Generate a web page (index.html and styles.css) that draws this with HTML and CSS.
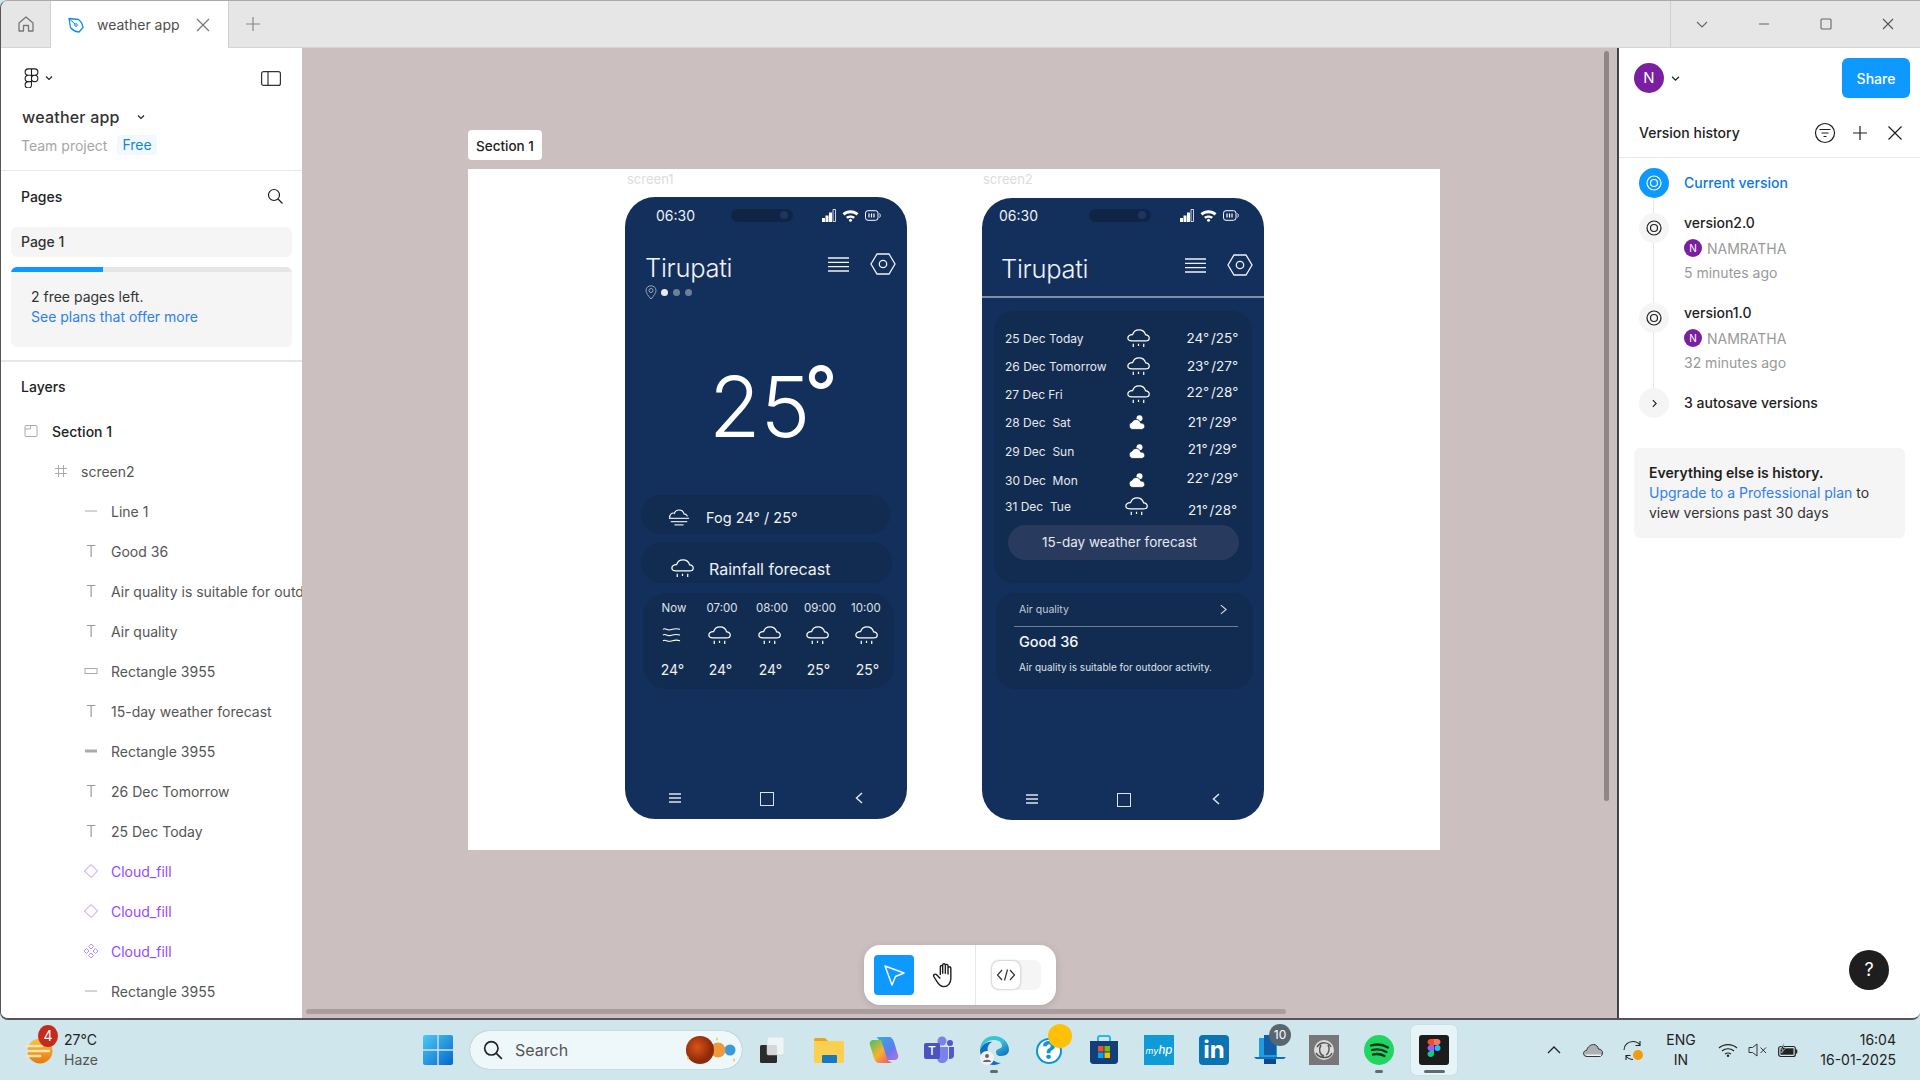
FILE: index.html
```html
<!DOCTYPE html>
<html lang="en">
<head>
<meta charset="utf-8">
<title>weather app – Figma</title>
<link rel="stylesheet" href="styles.css">
</head>
<body>
<svg class="sprite" xmlns="http://www.w3.org/2000/svg">
  <symbol id="rain" viewBox="0 0 24 20">
    <path d="M5 12.5H19.5C22 12.5 23.3 11 23.3 9.4C23.3 7.5 21.5 6 19.5 6.2C18.6 3.2 15.8 1 12.6 1C9.2 1 6.6 3.1 5.8 6C3 5.8.8 7.4.8 9.5C.8 11.3 2.6 12.5 5 12.5Z" fill="none" stroke="currentColor" stroke-width="1.3"/>
    <path d="M6.5 15.5V19M12 15.5V18M17.5 15.5V19" stroke="currentColor" stroke-width="1.3" fill="none"/>
  </symbol>
  <symbol id="moon" viewBox="0 0 16 14.500">
    <circle cx="10.500" cy="3" r="3" fill="currentColor"/>
    <path d="M4 14.200C1.800 14.200 .2 12.500 .2 10.500C.2 8.500 1.600 7.200 3 7C3.800 5.200 5.400 4.200 7.200 4.200C9.600 4.200 11.200 5.800 11.700 7.800C14 7.600 15.800 9 15.800 11.100C15.800 12.900 14.400 14.200 12.400 14.200Z" fill="currentColor" stroke="#122b50" stroke-width=".8"/>
  </symbol>
  <symbol id="burger" viewBox="0 0 21 15">
    <path d="M0 1H21M0 5.300H21M0 9.600H21M0 14H21" stroke="currentColor" stroke-width="1.300" fill="none"/>
  </symbol>
  <symbol id="hex" viewBox="0 0 26 22">
    <path d="M7 1H19L25 11L19 21H7L1 11Z" fill="none" stroke="currentColor" stroke-width="1.300"/>
    <circle cx="13" cy="11" r="3.700" fill="none" stroke="currentColor" stroke-width="1.300"/>
  </symbol>
  <symbol id="signal" viewBox="0 0 14 13">
    <path d="M0 9h3v4H0zM3.500 6.500h3V13h-3zM7 3.500h3V13H7z" fill="currentColor"/>
    <path d="M11 .5h2.500V12.500H11z" fill="none" stroke="currentColor" stroke-width=".8"/>
  </symbol>
  <symbol id="wifi" viewBox="0 0 17 13">
    <path d="M.5 4.300C5 .3 12 .3 16.500 4.300L14.500 6.500C11 3.500 6 3.500 2.500 6.500Z" fill="currentColor"/>
    <path d="M4 8C6.500 6 10.500 6 13 8L11.300 9.700C9.700 8.500 7.300 8.500 5.700 9.700Z" fill="currentColor"/>
    <circle cx="8.500" cy="11.300" r="1.500" fill="currentColor"/>
  </symbol>
  <symbol id="batt" viewBox="0 0 16 11">
    <rect x=".5" y=".7" width="12.500" height="9.600" rx="2.500" fill="none" stroke="currentColor" stroke-width="1"/>
    <path d="M4 3.500V7.500M6.500 3.500V7.500M9 3.500V7.500" stroke="currentColor" stroke-width="1.200"/>
    <path d="M14.500 3.500C15.500 4.500 15.500 6.500 14.500 7.500" stroke="currentColor" fill="none"/>
  </symbol>
  <symbol id="navburger" viewBox="0 0 14 14">
    <path d="M1 3H13M1 7H13M1 11H13" stroke="currentColor" stroke-width="1.500"/>
  </symbol>
  <symbol id="navsquare" viewBox="0 0 14 14">
    <rect x=".5" y=".5" width="13" height="13" fill="none" stroke="currentColor" stroke-width="1"/>
  </symbol>
  <symbol id="navback" viewBox="0 0 14 14">
    <path d="M10 2L4.500 7L10 12" fill="none" stroke="currentColor" stroke-width="1.500"/>
  </symbol>
  <symbol id="versiondot" viewBox="0 0 16 16">
    <circle cx="8" cy="8" r="7" fill="none" stroke="currentColor" stroke-width="1.200"/>
    <circle cx="8" cy="8" r="3.500" fill="none" stroke="currentColor" stroke-width="1.200"/>
  </symbol>
  <symbol id="chev" viewBox="0 0 8 6">
    <path d="M1 1.500L4 4.500L7 1.500" fill="none" stroke="currentColor" stroke-width="1.100"/>
  </symbol>
  <symbol id="diamond" viewBox="0 0 16 16">
    <path d="M8 1.500L14.500 8L8 14.500L1.500 8Z" fill="none" stroke="currentColor" stroke-width="1"/>
  </symbol>
</svg>

<div class="app">
  <header class="tabbar">
    <div class="tab-home">
      <svg class="i16" viewBox="0 0 16 16"><path d="M1 7L8 1L15 7V15H10.500V9.500H5.500V15H1Z" fill="none" stroke="#777" stroke-width="1.300" stroke-linejoin="round"/></svg>
    </div>
    <div class="tab-active">
      <svg class="i16" viewBox="0 0 16 16"><path d="M1 1.500L10.500 2.500C12.500 4 14.500 7 15 10.500L11 15C7.500 14.500 4 12.500 2.500 10.500Z" fill="none" stroke="#0d8ee8" stroke-width="1.300" stroke-linejoin="round"/><circle cx="8" cy="8" r="1.300" fill="none" stroke="#0d8ee8"/><path d="M1 1.500L7 7" stroke="#0d8ee8"/></svg>
      <span class="tab-name">weather app</span>
      <svg class="i14 tab-close" viewBox="0 0 14 14"><path d="M1 1L13 13M13 1L1 13" stroke="#777" stroke-width="1.200"/></svg>
    </div>
    <div class="tab-plus">
      <svg class="i14" viewBox="0 0 14 14"><path d="M7 0V14M0 7H14" stroke="#888" stroke-width="1.200"/></svg>
    </div>
    <div class="win-controls">
      <svg class="i12" viewBox="0 0 12 12"><path d="M1 4L6 9L11 4" fill="none" stroke="#666" stroke-width="1.100"/></svg>
      <svg class="i12" viewBox="0 0 12 12"><path d="M1 6H11" stroke="#666" stroke-width="1.100"/></svg>
      <svg class="i12" viewBox="0 0 12 12"><rect x="1" y="1" width="10" height="10" rx="1" fill="none" stroke="#666" stroke-width="1.100"/></svg>
      <svg class="i12" viewBox="0 0 12 12"><path d="M1 1L11 11M11 1L1 11" stroke="#555" stroke-width="1.100"/></svg>
    </div>
  </header>

  <div class="workspace">
    <aside class="left">
      <section class="lp-top">
        <div class="lp-brand">
          <div class="lp-logo">
            <svg class="logo" viewBox="0 0 16 22"><path d="M8 1H4.500C2.600 1 1 2.500 1 4.500S2.600 8 4.500 8H8ZM8 1H11.500C13.400 1 15 2.500 15 4.500S13.400 8 11.500 8H8ZM8 8H4.500C2.600 8 1 9.500 1 11.500S2.600 15 4.500 15H8ZM8 15H4.500C2.600 15 1 16.500 1 18.500S2.600 22 4.500 22C6.400 22 8 20.400 8 18.500ZM15 11.500C15 13.400 13.400 15 11.500 15S8 13.400 8 11.500 9.600 8 11.500 8 15 9.600 15 11.500Z" fill="none" stroke="#1e1e1e" stroke-width="1.200"/></svg>
            <svg class="chev" viewBox="0 0 8 6"><use href="#chev"/></svg>
          </div>
          <svg class="toggle" viewBox="0 0 20 15"><rect x=".6" y=".6" width="18.800" height="13.800" rx="2" fill="none" stroke="#333" stroke-width="1.200"/><path d="M7 .6V14.400" stroke="#333" stroke-width="1.200"/></svg>
        </div>
        <div class="lp-title"><span>weather app</span><svg class="chev" viewBox="0 0 8 6"><use href="#chev"/></svg></div>
        <div class="lp-meta"><span class="muted">Team project</span><span class="free">Free</span></div>
      </section>

      <section class="lp-pages">
        <div class="lp-head">
          <span class="lp-heading">Pages</span>
          <svg class="i16" viewBox="0 0 16 16"><circle cx="7" cy="7" r="5.500" fill="none" stroke="#1e1e1e" stroke-width="1.200"/><path d="M11 11L15.500 15.500" stroke="#1e1e1e" stroke-width="1.200"/></svg>
        </div>
        <div class="page-item">Page 1</div>
        <div class="quota">
          <div class="quota-bar"><div class="quota-fill"></div></div>
          <div class="quota-text"><div>2 free pages left.</div><div class="link">See plans that offer more</div></div>
        </div>
      </section>

      <section class="lp-layers">
        <div class="lp-heading layers-title">Layers</div>
        <div class="layer lv0 strong"><svg class="i14 ic-grey" viewBox="0 0 14 14"><rect x="1" y="1.500" width="12" height="11" rx="1" fill="none" stroke="currentColor"/><path d="M1 5H6.500V1.500" fill="none" stroke="currentColor"/></svg><span>Section 1</span></div>
        <div class="layer lv1"><svg class="i14 ic-grey" viewBox="0 0 14 14"><path d="M4.500 1V13M9.500 1V13M1 4.500H13M1 9.500H13" stroke="currentColor"/></svg><span>screen2</span></div>
        <div class="layer lv2"><svg class="i14 ic-grey" viewBox="0 0 14 14"><path d="M1 7H13" stroke="currentColor"/></svg><span>Line 1</span></div>
        <div class="layer lv2"><b class="t-ic">T</b><span>Good 36</span></div>
        <div class="layer lv2"><b class="t-ic">T</b><span>Air quality is suitable for outdoor activity.</span></div>
        <div class="layer lv2"><b class="t-ic">T</b><span>Air quality</span></div>
        <div class="layer lv2"><svg class="i14 ic-grey" viewBox="0 0 14 14"><rect x="1" y="4.500" width="12" height="5" fill="none" stroke="currentColor"/></svg><span>Rectangle 3955</span></div>
        <div class="layer lv2"><b class="t-ic">T</b><span>15-day weather forecast</span></div>
        <div class="layer lv2"><svg class="i14 ic-grey" viewBox="0 0 14 14"><path d="M1 7H13" stroke="currentColor" stroke-width="3"/></svg><span>Rectangle 3955</span></div>
        <div class="layer lv2"><b class="t-ic">T</b><span>26 Dec Tomorrow</span></div>
        <div class="layer lv2"><b class="t-ic">T</b><span>25 Dec Today</span></div>
        <div class="layer lv2 comp"><svg class="i16" viewBox="0 0 16 16"><use href="#diamond"/></svg><span>Cloud_fill</span></div>
        <div class="layer lv2 comp"><svg class="i16" viewBox="0 0 16 16"><use href="#diamond"/></svg><span>Cloud_fill</span></div>
        <div class="layer lv2 comp"><svg class="i16" viewBox="0 0 16 16"><path d="M8 1L10.500 3.500L8 6L5.500 3.500ZM8 10L10.500 12.500L8 15L5.500 12.500ZM3.500 5.500L6 8L3.500 10.500L1 8ZM12.500 5.500L15 8L12.500 10.500L10 8Z" fill="none" stroke="currentColor"/></svg><span>Cloud_fill</span></div>
        <div class="layer lv2"><svg class="i14 ic-grey" viewBox="0 0 14 14"><path d="M1 7H13" stroke="currentColor"/></svg><span>Rectangle 3955</span></div>
      </section>
    </aside>

    <main class="canvas">
      <div class="section-sheet"></div>
      <div class="section-label">Section 1</div>
      <div class="frame-label fl1">screen1</div>
      <div class="frame-label fl2">screen2</div>

      <article class="phone ph1">
        <div class="status st1">
          <span class="clock">06:30</span>
          <span class="pill"><i></i></span>
          <span class="st-icons">
            <svg class="s-signal"><use href="#signal"/></svg>
            <svg class="s-wifi"><use href="#wifi"/></svg>
            <svg class="s-batt"><use href="#batt"/></svg>
          </span>
        </div>
        <div class="app-head">
          <h1 class="city">Tirupati</h1>
          <span class="head-icons">
            <svg class="h-burger"><use href="#burger"/></svg>
            <svg class="h-hex"><use href="#hex"/></svg>
          </span>
        </div>
        <div class="pager">
          <svg class="pin" viewBox="0 0 12 15"><path d="M6 14C3 10.500 1 8 1 5.500C1 2.800 3.200 .8 6 .8S11 2.800 11 5.500C11 8 9 10.500 6 14Z" fill="none" stroke="#9aa6b8" stroke-width="1"/><circle cx="6" cy="5.500" r="2" fill="none" stroke="#9aa6b8"/></svg>
          <i class="dot on"></i><i class="dot"></i><i class="dot"></i>
        </div>
        <div class="big-temp">25<span class="deg">°</span></div>
        <div class="bar fog">
          <svg class="fog-ic" viewBox="0 0 24 20"><path d="M2 11C1 6 5 4.500 7 5.500C8.500 .5 16 .5 17.500 6C19 6 21 7.500 21 9" fill="none" stroke="#fff" stroke-width="1.200"/><path d="M1 11H23M3 14.500H21M7 18H17" stroke="#d8dde6" stroke-width="1.300"/></svg>
          <span>Fog 24° / 25°</span>
        </div>
        <div class="bar rainbar">
          <svg class="rain-ic"><use href="#rain"/></svg>
          <span>Rainfall forecast</span>
        </div>
        <div class="hours">
          <span class="h-lab">Now</span><span class="h-lab">07:00</span><span class="h-lab">08:00</span><span class="h-lab">09:00</span><span class="h-lab">10:00</span>
          <svg class="h-ic" viewBox="0 0 24 20"><path d="M3 3.500C6 1.500 7 5 11 4S16 2 21 3.500M3 9.500C6 7.500 7 11 11 10S16 8 21 9.500M3 15.500C6 13.500 7 17 11 16S16 14 21 15.500" fill="none" stroke="currentColor" stroke-width="1.100"/></svg>
          <svg class="h-ic"><use href="#rain"/></svg>
          <svg class="h-ic"><use href="#rain"/></svg>
          <svg class="h-ic"><use href="#rain"/></svg>
          <svg class="h-ic"><use href="#rain"/></svg>
          <span class="h-temp">24°</span><span class="h-temp">24°</span><span class="h-temp">24°</span><span class="h-temp">25°</span><span class="h-temp">25°</span>
        </div>
        <nav class="sysnav">
          <svg class="n-ic"><use href="#navburger"/></svg>
          <svg class="n-ic n-sq"><use href="#navsquare"/></svg>
          <svg class="n-ic"><use href="#navback"/></svg>
        </nav>
      </article>

      <article class="phone ph2">
        <div class="status st2">
          <span class="clock">06:30</span>
          <span class="pill"><i></i></span>
          <span class="st-icons">
            <svg class="s-signal"><use href="#signal"/></svg>
            <svg class="s-wifi"><use href="#wifi"/></svg>
            <svg class="s-batt"><use href="#batt"/></svg>
          </span>
        </div>
        <div class="app-head head2">
          <h1 class="city">Tirupati</h1>
          <span class="head-icons">
            <svg class="h-burger"><use href="#burger"/></svg>
            <svg class="h-hex"><use href="#hex"/></svg>
          </span>
        </div>
        <div class="rule"></div>
        <div class="forecast">
          <div class="day"><span>25 Dec Today</span><svg class="d-ic"><use href="#rain"/></svg><span class="d-t">24° /25°</span></div>
          <div class="day"><span>26 Dec Tomorrow</span><svg class="d-ic"><use href="#rain"/></svg><span class="d-t">23° /27°</span></div>
          <div class="day up"><span>27 Dec Fri</span><svg class="d-ic"><use href="#rain"/></svg><span class="d-t">22° /28°</span></div>
          <div class="day"><span>28 Dec&nbsp; Sat</span><svg class="d-moon"><use href="#moon"/></svg><span class="d-t">21° /29°</span></div>
          <div class="day d30 up"><span>29 Dec&nbsp; Sun</span><svg class="d-moon"><use href="#moon"/></svg><span class="d-t">21° /29°</span></div>
          <div class="day d29 up"><span>30 Dec&nbsp; Mon</span><svg class="d-moon"><use href="#moon"/></svg><span class="d-t">22° /29°</span></div>
          <div class="day d20"><span>31 Dec&nbsp; Tue</span><svg class="d-ic"><use href="#rain"/></svg><span class="d-t">21° /28°</span></div>
          <div class="fc-btn">15-day weather forecast</div>
        </div>
        <div class="air">
          <div class="air-head"><span>Air quality</span><svg class="air-chev" viewBox="0 0 8 12"><path d="M1 1L7 6L1 11" fill="none" stroke="#d5dae3" stroke-width="1.300"/></svg></div>
          <div class="air-rule"></div>
          <div class="air-val">Good 36</div>
          <div class="air-note">Air quality is suitable for outdoor activity.</div>
        </div>
        <nav class="sysnav">
          <svg class="n-ic"><use href="#navburger"/></svg>
          <svg class="n-ic n-sq"><use href="#navsquare"/></svg>
          <svg class="n-ic"><use href="#navback"/></svg>
        </nav>
      </article>

      <div class="toolbar">
        <div class="tool-move"><svg viewBox="0 0 24 24" class="i24"><path d="M3 3L22 10L13.500 13.500L10 22Z" fill="none" stroke="#fff" stroke-width="1.400" stroke-linejoin="round"/></svg></div>
        <div class="tool-hand"><svg viewBox="0 0 24 24" class="hand"><path d="M8 12V5C8 3.500 10 3.500 10 5V11M10 11V3.500C10 2 12.300 2 12.300 3.500V11M12.300 11V4C12.300 2.500 14.600 2.500 14.600 4V11.500M14.600 11.500V6C14.600 4.500 17 4.500 17 6V15C17 19 14.500 22 11 22C8 22 6.500 20 5 17.500L2.500 13.500C1.500 11.500 4 10.500 5 12L8 15" fill="#fff" stroke="#1e1e1e" stroke-width="1.200" stroke-linejoin="round"/></svg></div>
        <div class="tool-sep"></div>
        <div class="tool-code"><span class="knob"><svg viewBox="0 0 20 14" class="code-ic"><path d="M6 2L1.500 7L6 12M14 2L18.500 7L14 12M11.500 1.500L8.500 12.500" fill="none" stroke="#333" stroke-width="1.200"/></svg></span></div>
      </div>

      <div class="scroll-v"></div>
      <div class="scroll-h"></div>
    </main>

    <aside class="right">
      <div class="rp-top">
        <div class="rp-user">
          <span class="avatar">N</span>
          <svg class="chev dark" viewBox="0 0 8 6"><use href="#chev"/></svg>
        </div>
        <button class="share">Share</button>
      </div>
      <div class="rp-head">
        <span class="rp-title">Version history</span>
        <span class="rp-actions">
          <svg class="i24" viewBox="0 0 24 24"><circle cx="12" cy="12" r="9.500" fill="none" stroke="#1e1e1e" stroke-width="1.200"/><path d="M6.500 8.500H17.500M8.500 12H15.500M10.500 15.500H13.500" stroke="#1e1e1e" stroke-width="1.200"/></svg>
          <svg class="i24" viewBox="0 0 24 24"><path d="M12 5V19M5 12H19" stroke="#1e1e1e" stroke-width="1.200"/></svg>
          <svg class="i24" viewBox="0 0 24 24"><path d="M5.500 5.500L18.500 18.500M18.500 5.500L5.500 18.500" stroke="#1e1e1e" stroke-width="1.200"/></svg>
        </span>
      </div>
      <div class="versions">
        <div class="v-line"></div>
        <div class="ver v-current">
          <span class="v-node blue"><svg class="v-dot"><use href="#versiondot"/></svg></span>
          <div class="v-body v-mid link-strong">Current version</div>
        </div>
        <div class="ver">
          <span class="v-node"><svg class="v-dot"><use href="#versiondot"/></svg></span>
          <div class="v-body">
            <div class="v-name">version2.0</div>
            <div class="v-user"><span class="mini">N</span><span>NAMRATHA</span></div>
            <div class="v-time">5 minutes ago</div>
          </div>
        </div>
        <div class="ver">
          <span class="v-node"><svg class="v-dot"><use href="#versiondot"/></svg></span>
          <div class="v-body">
            <div class="v-name">version1.0</div>
            <div class="v-user"><span class="mini">N</span><span>NAMRATHA</span></div>
            <div class="v-time">32 minutes ago</div>
          </div>
        </div>
        <div class="ver v-auto">
          <span class="v-node"><svg class="v-chev" viewBox="0 0 6 10"><path d="M1 1L5 5L1 9" fill="none" stroke="#1e1e1e" stroke-width="1.300"/></svg></span>
          <div class="v-body v-mid v-name">3 autosave versions</div>
        </div>
      </div>
      <div class="upsell">
        <div class="upsell-head">Everything else is history.</div>
        <div><span class="link">Upgrade to a Professional plan</span> to</div>
        <div>view versions past 30 days</div>
      </div>
      <div class="help">?</div>
    </aside>
  </div>
</div>

<footer class="taskbar">
  <div class="tb-weather">
    <span class="w-icon">
      <svg class="i30" viewBox="0 0 30 26"><defs><linearGradient id="sun" x1="0" y1="0" x2="0" y2="1"><stop offset="0" stop-color="#f9c53a"/><stop offset="1" stop-color="#e8780f"/></linearGradient></defs><circle cx="15" cy="13" r="12.500" fill="url(#sun)"/><path d="M1 8H17M3 13H24M1 18H15" stroke="#f7e3b4" stroke-width="2.500" stroke-linecap="round"/></svg>
      <b class="w-badge">4</b>
    </span>
    <span class="w-text"><span>27°C</span><span class="w-sub">Haze</span></span>
  </div>
  <svg class="winlogo" viewBox="0 0 30 30"><defs><linearGradient id="win" x1="0" y1="0" x2="1" y2="1"><stop offset="0" stop-color="#4fc8f8"/><stop offset="1" stop-color="#0467c9"/></linearGradient></defs><path d="M0 2C0 .9.900 0 2 0H14.300V14.300H0ZM15.700 0H28C29.100 0 30 .9 30 2V14.300H15.700ZM0 15.700H14.300V30H2C.9 30 0 29.100 0 28ZM15.700 15.700H30V28C30 29.100 29.100 30 28 30H15.700Z" fill="url(#win)"/></svg>
  <div class="tb-search">
    <svg class="s-ic" viewBox="0 0 18 18"><circle cx="7.500" cy="7.500" r="6" fill="none" stroke="#222" stroke-width="1.500"/><path d="M12 12L17 17" stroke="#222" stroke-width="1.500"/></svg>
    <span class="s-text">Search</span>
    <svg class="planets" viewBox="0 0 56 30"><defs><radialGradient id="pl" cx=".4" cy=".4"><stop offset="0" stop-color="#d9541a"/><stop offset="1" stop-color="#8f2a08"/></radialGradient></defs><circle cx="45" cy="15" r="5.500" fill="#3c9ad6"/><circle cx="33" cy="15" r="7.500" fill="#ef9a3a"/><circle cx="15" cy="15" r="14" fill="url(#pl)"/><path d="M2 23l1 2 1-2-1-2zM31 4l1 2 1-2-1-2zM48 25l1 2 1-2-1-2z" fill="#f5c242"/></svg>
  </div>
  <svg class="taskview" viewBox="0 0 24 26"><rect y="8" width="17" height="18" rx="1.500" fill="#2b2b2b"/><rect x="7" width="17" height="18" rx="1.500" fill="#f4f6f7" fill-opacity=".85" stroke="#c5ced2" stroke-width=".5"/></svg>
  <div class="tb-apps">
    <svg class="app-ic" viewBox="0 0 30 30"><path d="M0 5C0 3.500 1 3 2 3H11L14 6H0Z" fill="#e6a51c"/><rect y="6" width="30" height="22" rx="2" fill="#fbcf4f"/><rect x="8" y="20" width="15" height="8" rx="1" fill="#1679c4"/></svg>
    <svg class="app-ic" viewBox="0 0 30 30"><defs><linearGradient id="cop1" x1="0" y1="0" x2="1" y2="1"><stop offset="0" stop-color="#29b6d8"/><stop offset=".6" stop-color="#5c7cf0"/><stop offset="1" stop-color="#c56ae0"/></linearGradient><linearGradient id="cop2" x1="0" y1="0" x2="1" y2="1"><stop offset="0" stop-color="#3ec26b"/><stop offset=".5" stop-color="#f7b32b"/><stop offset="1" stop-color="#ee4b7a"/></linearGradient></defs><path d="M10 2H20C22.500 2 24 4 25 7L29 20C30 23 28 25 25 25H17L11 7C10.500 5 9 3 7 3C8 2.300 9 2 10 2Z" fill="url(#cop1)"/><path d="M20 28H10C7.500 28 6 26 5 23L1 10C0 7 2 5 5 5H12L18 23C18.500 25 20 27 23 27C22 27.700 21 28 20 28Z" fill="url(#cop2)"/></svg>
    <span class="app-wrap">
      <svg class="app-ic" viewBox="0 0 30 30"><circle cx="18" cy="6" r="4.500" fill="#7b83eb"/><circle cx="26" cy="8" r="3" fill="#5059c9"/><path d="M13 12H24V22C24 26 21 28 18 28S13 26 13 22Z" fill="#7b83eb"/><path d="M25 12H30V20C30 23 28 24 25 24Z" fill="#5059c9"/><rect y="8" width="16" height="16" rx="2" fill="#4b53bc"/></svg>
      <b class="teams-t">T</b>
    </span>
    <span class="app-wrap dotted">
      <svg class="app-ic" viewBox="0 0 30 30"><defs><linearGradient id="ed" x1="0" y1="0" x2="1" y2="1"><stop offset="0" stop-color="#3ccbc0"/><stop offset=".5" stop-color="#36c2e0"/><stop offset="1" stop-color="#0b63b8"/></linearGradient></defs><path d="M15 1C23 1 30 7 30 15C30 18 27 21 22 21C18 21 17 19 17 17C17 13 23 14 23 11C23 7 19 5 15 5C8 5 3 10 1 15C1 7 7 1 15 1Z" fill="url(#ed)"/><path d="M1 15C3 10 8 6 13 7C9 9 8 13 9 17C10 22 15 28 22 28C19 29 17 30 15 30C7 30 1 23 1 15Z" fill="#0f6fc6"/><circle cx="8" cy="23" r="7" fill="#f2f2f2"/><circle cx="8" cy="21" r="2" fill="#666"/><path d="M4 27C4 24 12 24 12 27Z" fill="#666"/></svg>
    </span>
    <span class="app-wrap">
      <svg class="app-ic" viewBox="0 0 30 30"><circle cx="15" cy="16" r="13" fill="#0a95d8"/><circle cx="15" cy="16" r="11" fill="#fff"/></svg>
      <b class="help-q">?</b>
      <i class="help-badge"></i>
    </span>
    <svg class="app-ic" viewBox="0 0 30 30"><path d="M9 7V3C9 1.500 10 1 11 1H19C20 1 21 1.500 21 3V7" fill="none" stroke="#29b6e8" stroke-width="2"/><path d="M1 6H29V26C29 28 27 29 26 29H4C3 29 1 28 1 26Z" fill="#123f77"/><rect x="9" y="11" width="5.500" height="5.500" fill="#f25022"/><rect x="15.500" y="11" width="5.500" height="5.500" fill="#7fba00"/><rect x="9" y="17.500" width="5.500" height="5.500" fill="#00a4ef"/><rect x="15.500" y="17.500" width="5.500" height="5.500" fill="#ffb900"/></svg>
    <span class="tile hp"><i>my<b>hp</b></i></span>
    <span class="tile li">in</span>
    <span class="app-wrap">
      <svg class="app-ic dev" viewBox="0 0 32 30"><path d="M5 3H23V22H5Z" fill="#1e9ee0"/><path d="M10 0H22V20H10Z" fill="#0f5fa8"/><path d="M0 22H32L30 24H2Z" fill="#0f6fc6"/><path d="M10 24H22V29H10Z" fill="#0b4a8a"/></svg>
      <b class="dev-badge">10</b>
    </span>
    <span class="grey-tile"><svg viewBox="0 0 30 30" class="app-ic"><circle cx="15" cy="15" r="10" fill="#dcdcdc"/><path d="M8 12C12 6 20 7 22 12M7 18C10 23 20 25 23 18M12 10C9 15 11 20 15 21M19 10C21 14 20 18 17 20" fill="none" stroke="#555" stroke-width="1.500"/></svg></span>
    <span class="app-wrap dotted">
      <svg class="app-ic" viewBox="0 0 30 30"><circle cx="15" cy="15" r="15" fill="#1ed760"/><path d="M7 10.500C12 9 19 9.500 24 12.500M8 15C12 14 18 14.300 22.500 17M9 19.500C12.500 18.700 17 19 20.500 21" fill="none" stroke="#12301d" stroke-width="2.300" stroke-linecap="round"/></svg>
    </span>
    <span class="app-wrap active">
      <svg class="app-ic" viewBox="0 0 30 30"><rect width="30" height="30" rx="3" fill="#1c1c1c"/><path d="M15 4H11.500C9.800 4 8.500 5.400 8.500 7S9.800 10 11.500 10H15Z" fill="#f24e1e"/><path d="M15 4H18.500C20.200 4 21.500 5.400 21.500 7S20.200 10 18.500 10H15Z" fill="#ff7262"/><path d="M15 10H11.500C9.800 10 8.500 11.400 8.500 13S9.800 16 11.500 16H15Z" fill="#a259ff"/><circle cx="18.500" cy="13" r="3" fill="#1abcfe"/><path d="M15 16H11.500C9.800 16 8.500 17.400 8.500 19S9.800 22 11.500 22 15 20.700 15 19Z" fill="#0acf83"/></svg>
    </span>
  </div>
  <div class="tray">
    <svg class="t-caret" viewBox="0 0 14 8"><path d="M1 7L7 1L13 7" fill="none" stroke="#222" stroke-width="1.300"/></svg>
    <svg class="t-cloud" viewBox="0 0 20 13"><path d="M4 12.500C1.500 12.500.5 11 .5 9.500C.5 7.500 2 6.500 3.500 6.500C4.500 3 7.500 .5 10.500 .5C13 .5 15 2.500 15.500 5C18 5 19.500 7 19.500 9C19.500 11 18 12.500 16 12.500Z" fill="#aab0b3" stroke="#333" stroke-width="1"/><path d="M2 10.500H18V12H4Z" fill="#f0f3f4"/></svg>
    <span class="t-sync">
      <svg viewBox="0 0 20 21" class="sync-ic"><path d="M1 10C1 5 5 1.500 10 1.500C13 1.500 15.500 3 17 5M17 1V5.500H12.500M3 16C5 18.500 7.500 19.500 10 19.500M3 20V15.500H7.500" fill="none" stroke="#222" stroke-width="1.100"/></svg>
      <i class="sync-dot"></i>
    </span>
    <span class="t-lang"><span class="line">ENG</span><span class="line">IN</span></span>
    <svg class="t-wifi" viewBox="0 0 20 14"><path d="M1 5C6 .5 14 .5 19 5M4 8C7.500 5 12.500 5 16 8M7 11C8.800 9.800 11.200 9.800 13 11" fill="none" stroke="#222" stroke-width="1.200"/><circle cx="10" cy="12.700" r="1.200" fill="#222"/></svg>
    <svg class="t-mute" viewBox="0 0 20 14"><path d="M1 4.500H4.500L9 1V13L4.500 9.500H1Z" fill="none" stroke="#333" stroke-width="1"/><path d="M12.500 4.500L18 10M18 4.500L12.500 10" stroke="#333" stroke-width="1"/></svg>
    <svg class="t-batt" viewBox="0 0 20 15"><rect x=".7" y="3.500" width="16.600" height="10" rx="2" fill="none" stroke="#222" stroke-width="1.200"/><rect x="2.500" y="5.300" width="13" height="6.400" fill="#222"/><path d="M18.500 6.500V10.500" stroke="#222" stroke-width="1.500"/><path d="M6 0L2.500 6H5L3.500 10L8 4.500H5.500Z" fill="#222" stroke="#cfe6ec" stroke-width=".6"/></svg>
    <span class="t-clock"><span class="line">16:04</span><span class="line">16-01-2025</span></span>
  </div>
</footer>
</body>
</html>
```

FILE: styles.css
```css
* { box-sizing: border-box; }
html, body { margin: 0; padding: 0; }
body {
  width: 1920px;
  height: 1080px;
  overflow: hidden;
  background: #cfe6ec;
  font-family: Inter, "Noto Sans", sans-serif;
  font-size: 14px;
  color: #1e1e1e;
  display: flex;
  flex-direction: column;
}
.sprite { display: none; }
svg { display: block; flex: none; }
.i12 { width: 12px; height: 12px; }
.i14 { width: 14px; height: 14px; }
.i16 { width: 16px; height: 16px; }
.i18 { width: 18px; height: 18px; }
.i24 { width: 24px; height: 24px; }
.i30 { width: 30px; height: 26px; }

.app {
  height: 1020px;
  display: flex;
  flex-direction: column;
  border: 1px solid #555;
  border-top-color: #aaa;
  border-bottom-width: 2px;
  border-right: 0;
  border-radius: 8px 0 8px 8px;
  overflow: hidden;
  flex: none;
}

/* tab bar */
.tabbar {
  height: 47px;
  flex: none;
  display: flex;
  background: #e6e6e6;
  border-bottom: 1px solid #d4d4d4;
}
.tab-home { width: 50px; display: flex; align-items: center; padding-left: 17px; border-right: 1px solid #d0d0d0; }
.tab-active { width: 178px; background: #fff; display: flex; align-items: center; padding-left: 17px; border-right: 1px solid #d0d0d0; margin-bottom: -1px; }
.tab-name { margin-left: 13px; font-size: 14px; color: #4f4f4f; width: 99px; }
.tab-close { margin-left: 0; }
.tab-plus { width: 50px; display: flex; align-items: center; padding-left: 17px; }
.win-controls {
  margin-left: auto;
  width: 250px;
  display: flex;
  align-items: center;
  padding-left: 25px;
  gap: 50px;
  border-left: 1px solid #d0d0d0;
}

.workspace { flex: 1; display: flex; min-height: 0; }

/* left panel */
.left { width: 301px; flex: none; background: #fff; overflow: hidden; }
.lp-top { height: 123px; border-bottom: 1px solid #e6e6e6; padding-top: 15px; }
.lp-brand { height: 30px; display: flex; align-items: center; justify-content: space-between; padding: 0 21px 0 23px; }
.lp-logo { display: flex; align-items: center; gap: 6px; }
.logo { width: 15px; height: 20px; }
.chev { width: 8px; height: 6px; color: #1e1e1e; }
.toggle { width: 20px; height: 15px; }
.lp-title { height: 24px; margin-top: 12px; padding-left: 21px; display: flex; align-items: center; gap: 17px; font-size: 16px; font-weight: 500; color: #333; letter-spacing: .2px; }
.lp-meta { height: 20px; margin-top: 6px; padding-left: 20px; display: flex; align-items: center; gap: 10px; }
.muted { color: #a6a6a6; }
.free { color: #0d84e8; background: #f2f8ff; border-radius: 4px; padding: 0 5px; line-height: 20px; }

.lp-pages { padding-top: 10px; height: 191px; border-bottom: 2px solid #e6e6e6; }
.lp-head { height: 30px; display: flex; align-items: center; justify-content: space-between; padding: 0 19px 0 20px; }
.lp-heading { font-weight: 500; font-size: 14px; color: #1e1e1e; }
.page-item { margin: 16px 10px 0; height: 30px; border-radius: 6px; background: #f5f5f5; font-weight: 500; padding-left: 10px; line-height: 30px; color: #333; }
.quota { margin: 10px 10px 0; height: 80px; background: #f5f5f5; border-radius: 6px; overflow: hidden; }
.quota-bar { height: 5px; background: #e6e6e6; }
.quota-fill { width: 92px; height: 5px; background: #0d99ff; }
.quota-text { margin: 15px 0 0 20px; line-height: 20px; color: #333; }
.link { color: #2f80ed; }

.layers-title { margin: 13px 0 12px 20px; line-height: 24px; }
.layer { height: 40px; display: flex; align-items: center; white-space: nowrap; color: #555; font-size: 14px; }
.layer.lv0 { padding-left: 23px; gap: 14px; }
.layer.lv1 { padding-left: 53px; gap: 13px; }
.layer.lv2 { padding-left: 82px; gap: 11px; }
.layer.lv2.comp { gap: 12px; }
.layer.lv2 > svg.i14 { margin-left: 1px; margin-right: 2px; }
.strong { color: #222; font-weight: 500; }
.ic-grey { color: #aaa; }
.t-ic { width: 14px; margin-left: 1px; margin-right: 2px; font-weight: 300; font-size: 16px; color: #999; text-align: center; flex: none; }
.comp { color: #9747ff; }
.comp svg { color: #b98fff; }

/* canvas */
.canvas { width: 1315px; flex: none; position: relative; background: #cbbfc0; overflow: hidden; }
.section-sheet { position: absolute; left: 166px; top: 121px; width: 972px; height: 681px; background: #fff; }
.section-label { position: absolute; left: 166px; top: 82px; width: 74px; height: 30px; background: #fff; border-radius: 4px; font-weight: 500; font-size: 13.500px; line-height: 32px; text-align: center; color: #222; }
.frame-label { position: absolute; top: 123px; font-size: 13px; line-height: 16px; color: #dcdcdc; }
.fl1 { left: 325px; }
.fl2 { left: 681px; }

.phone {
  position: absolute;
  width: 282px;
  height: 622px;
  background: #132f5c;
  border-radius: 30px;
  color: #fff;
  display: flex;
  flex-direction: column;
}
.ph1 { left: 323px; top: 149px; }
.ph2 { left: 680px; top: 150px; }

.status { height: 36px; display: flex; align-items: center; flex: none; }
.st1 { padding-left: 31px; }
.st2 { padding-left: 17px; padding-bottom: 2px; }
.clock { font-size: 14px; color: #eef1f5; }
.st1 .clock { width: 75px; }
.st2 .clock { width: 90px; }
.pill { width: 62px; height: 13px; border-radius: 7px; background: #102545; position: relative; }
.pill i { position: absolute; right: 5px; top: 2.500px; width: 8px; height: 8px; border-radius: 50%; background: #1c3661; }
.st-icons { display: flex; align-items: center; margin-left: 29px; color: #fff; }
.s-signal { width: 14px; height: 13px; }
.s-wifi { width: 17px; height: 13px; margin-left: 6px; }
.s-batt { width: 16px; height: 11px; margin-left: 6px; }

.app-head { height: 40px; margin-top: 15px; display: flex; align-items: center; padding-left: 20px; flex: none; }
.city { margin: 0; font-size: 25.500px; letter-spacing: -.3px; font-weight: 300; line-height: 40px; color: #f0f3f7; }
.head-icons { margin-left: auto; display: flex; align-items: center; gap: 21px; margin-right: 11px; margin-bottom: 8px; color: #f0f3f7; }
.h-burger { width: 21px; height: 15px; }
.h-hex { width: 26px; height: 22px; }
.pager { height: 13px; margin-top: -2px; padding-left: 20px; display: flex; align-items: center; gap: 5px; flex: none; }
.pin { width: 12px; height: 15px; }
.dot { width: 7px; height: 7px; border-radius: 50%; background: #6f7f99; }
.dot.on { background: #e8ebf0; margin-left: -1px; }

.big-temp { margin-top: 58px; height: 100px; line-height: 100px; padding-left: 84px; font-size: 84px; font-weight: 300; color: #fff; white-space: nowrap; flex: none; }
.deg { font-size: 72px; font-weight: 500; line-height: 0; vertical-align: 19px; margin-left: -6px; }
.bar { display: flex; align-items: center; background: #122b50; flex: none; }
.fog { margin: 38px 0 0 16px; width: 249px; height: 39px; border-radius: 20px; padding: 5px 0 0 27px; gap: 16px; font-size: 14.500px; color: #eef1f5; }
.fog-ic { width: 22px; height: 19px; }
.rainbar { margin: 8px 0 0 16px; width: 251px; height: 41px; border-radius: 21px; padding: 12px 0 0 30px; gap: 15px; font-size: 16px; color: #eef1f5; }
.rain-ic { width: 23px; height: 19px; color: #fff; }
.hours {
  margin: 10px 0 0 18px;
  width: 251px;
  height: 96px;
  border-radius: 24px;
  background: #122b50;
  display: grid;
  grid-template-columns: 48px 48px 52px 44px 48px;
  grid-template-rows: 16px 22px 20px;
  row-gap: 10px;
  padding: 5px 0 0 7px;
  justify-items: center;
  align-items: center;
  flex: none;
}
.h-lab { font-size: 11.500px; margin-top: 3px; color: #dfe3ea; }
.h-ic { width: 23px; height: 19px; margin-right: 6px; color: #fff; }
.h-ic:last-of-type { margin-right: 0; }
.h-temp { font-size: 14px; margin: 6px 3px 0 0; color: #eef1f5; }
.h-temp:last-of-type { margin: 6px 0 0 3px; }

.sysnav { margin-top: auto; height: 38px; padding: 0 41px 5px 43px; display: flex; align-items: center; justify-content: space-between; color: #dfe3ea; flex: none; }
.n-ic { width: 14px; height: 14px; }
.n-sq { margin-top: 3px; }

.head2 { padding-left: 19px; }
.rule { height: 2px; margin-top: 7px; background: #7f8da5; flex: none; }
.forecast { margin: 13px 0 0 12px; width: 258px; height: 272px; background: #122b50; border-radius: 20px; padding-top: 13px; flex: none; }
.day { height: 28px; display: grid; grid-template-columns: 122px 24px 1fr; padding-left: 11px; align-items: center; font-size: 12px; color: #e6e9ef; }
.d30 { height: 30px; }
.d29 { height: 29px; }
.d20 { height: 20px; }
.d-ic { width: 23px; height: 19px; color: #fff; }
.d20 .d-ic { margin-left: -2px; }
.d-moon { width: 16px; height: 15px; color: #fff; margin-left: 2px; }
.d-t { font-size: 13.500px; word-spacing: -2px; text-align: center; padding-left: 22px; color: #eef1f5; white-space: nowrap; }
.up .d-t { margin-top: -5px; }
.d20 .d-t { margin-top: 7px; }
.fc-btn { margin: 10px 0 0 14px; width: 231px; height: 35px; border-radius: 18px; background: #283b5e; text-align: center; line-height: 34px; padding-right: 8px; font-size: 13.500px; color: #e6e9ef; }
.air { margin: 10px 0 0 14px; width: 257px; height: 96px; background: #122b50; border-radius: 20px; flex: none; }
.air-head { height: 30px; padding: 3px 26px 0 23px; display: flex; align-items: center; justify-content: space-between; font-size: 10.500px; color: #c4cad5; }
.air-chev { width: 7px; height: 11px; }
.air-rule { height: 1px; margin: 3px 15px 0 18px; background: #6f7d96; }
.air-val { margin: 6px 0 0 23px; font-size: 14.500px; font-weight: 500; line-height: 18px; color: #f5f6f8; }
.air-note { margin: 9px 0 0 23px; font-size: 10px; line-height: 14px; color: #dfe3ea; }

/* toolbar */
.toolbar {
  position: absolute;
  left: 562px;
  top: 897px;
  width: 192px;
  height: 60px;
  background: #fff;
  border-radius: 16px;
  box-shadow: 0 2px 8px rgba(0,0,0,.12);
  display: flex;
  align-items: center;
  padding-left: 10px;
}
.tool-move { width: 40px; height: 40px; background: #0d99ff; border-radius: 4px; display: flex; align-items: center; justify-content: center; }
.tool-hand { width: 40px; height: 40px; margin-left: 9px; padding-left: 3px; display: flex; align-items: center; justify-content: center; }
.hand { width: 28px; height: 28px; }
.tool-sep { width: 1px; height: 60px; background: #e6e6e6; margin-left: 12px; }
.tool-code { width: 50px; height: 30px; margin-left: 15px; background: #f5f5f5; border-radius: 7px; padding: 1px; }
.knob { width: 28px; height: 28px; background: #fff; border-radius: 7px; box-shadow: 0 0 3px rgba(0,0,0,.3); display: flex; align-items: center; justify-content: center; }
.code-ic { width: 20px; height: 14px; }
.scroll-v { position: absolute; right: 8px; top: 3px; width: 5px; height: 750px; background: #8f8687; border-radius: 3px; }
.scroll-h { position: absolute; left: 4px; bottom: 4px; width: 980px; height: 5px; background: #a89e9f; border-radius: 3px; }

/* right panel */
.right { flex: 1; background: #fff; border-left: 2px solid #444; position: relative; }
.rp-top { height: 60px; display: flex; align-items: center; justify-content: space-between; padding: 0 10px 0 15px; }
.rp-user { display: flex; align-items: center; gap: 7px; }
.avatar { width: 30px; height: 30px; border-radius: 50%; background: #7b1fa2; color: #fff; text-align: center; line-height: 30px; font-size: 15px; }
.chev.dark { width: 9px; height: 7px; }
.share { width: 68px; height: 40px; border: 0; border-radius: 6px; background: #0d99ff; color: #fff; font: 500 14px Inter, sans-serif; }
.rp-head { height: 50px; border-bottom: 1px solid #e6e6e6; display: flex; align-items: center; justify-content: space-between; padding: 0 13px 0 20px; }
.rp-title { font-weight: 500; font-size: 14px; }
.rp-actions { display: flex; gap: 11px; }
.versions { position: relative; padding: 10px 0 0 20px; }
.v-line { position: absolute; left: 34px; top: 40px; width: 1px; height: 192px; background: #e6e6e6; }
.ver { position: relative; display: flex; gap: 15px; margin-top: 15px; }
.v-current { margin-top: 0; }
.ver + .ver + .ver { margin-top: 20px; }
.ver + .ver + .ver.v-auto { margin-top: 15px; }
.v-node { width: 30px; height: 30px; border-radius: 50%; background: #f5f5f5; display: flex; align-items: center; justify-content: center; color: #1e1e1e; flex: none; }
.v-node.blue { background: #0d99ff; color: #fff; }
.v-dot { width: 16px; height: 16px; }
.v-chev { width: 5px; height: 9px; }
.v-mid { line-height: 30px; }
.link-strong { color: #0a78e6; font-weight: 500; }
.v-name { font-weight: 500; line-height: 20px; }
.v-auto .v-name { line-height: 30px; }
.v-user { display: flex; align-items: center; gap: 5px; margin-top: 5px; height: 20px; color: #999; }
.mini { width: 18px; height: 18px; border-radius: 50%; background: #7b1fa2; color: #fff; font-size: 10px; line-height: 18px; text-align: center; }
.v-time { margin-top: 5px; line-height: 20px; color: #999; }
.upsell { margin: 30px 0 0 15px; width: 271px; height: 90px; background: #f5f5f5; border-radius: 6px; padding: 15px; line-height: 20px; color: #333; white-space: nowrap; }
.upsell-head { font-weight: 600; color: #1e1e1e; }
.help { position: absolute; right: 31px; bottom: 28px; width: 40px; height: 40px; border-radius: 50%; background: #1e1e1e; color: #fff; text-align: center; line-height: 40px; font-size: 18px; }

/* taskbar */
.taskbar { flex: 1; display: flex; align-items: center; padding-left: 25px; color: #222; }
.tb-weather { width: 398px; display: flex; align-items: center; flex: none; }
.w-icon { position: relative; width: 30px; height: 26px; margin-top: 2px; }
.w-badge { position: absolute; left: 13px; top: -13px; width: 20px; height: 22px; border-radius: 50%; background: #c42b1c; color: #fff; font-weight: 400; font-size: 14px; line-height: 22px; text-align: center; }
.w-text { margin-left: 9px; display: flex; flex-direction: column; font-size: 14px; line-height: 20px; }
.w-sub { color: #555; }
.winlogo { width: 30px; height: 30px; }
.tb-search { margin-left: 17px; width: 272px; height: 38px; border-radius: 19px; background: #eef7fa; box-shadow: 0 0 1px rgba(0,0,0,.4); display: flex; align-items: center; padding-left: 13px; flex: none; }
.s-ic { width: 20px; height: 20px; }
.s-text { margin-left: 12px; font-size: 16px; color: #555; }
.planets { width: 56px; height: 30px; margin-left: auto; margin-right: 1px; }
.taskview { width: 24px; height: 26px; margin-left: 18px; }
.tb-apps { margin-left: 30px; display: flex; align-items: center; gap: 25px; flex: none; }
.app-ic { width: 30px; height: 30px; }
.app-wrap { position: relative; width: 30px; height: 30px; display: block; flex: none; }
.teams-t { position: absolute; left: 0; top: 8px; width: 16px; text-align: center; color: #fff; font-size: 12px; line-height: 16px; font-weight: 500; }
.help-q { position: absolute; left: 0; top: 2px; width: 30px; text-align: center; color: #0a95d8; font-size: 24px; line-height: 28px; font-weight: 800; }
.help-badge { position: absolute; left: 14px; top: -11px; width: 24px; height: 24px; border-radius: 50%; background: #ffc107; }
.tile { width: 30px; height: 30px; flex: none; display: flex; align-items: center; justify-content: center; color: #fff; }
.hp { background: #0f9bd7; font-size: 9px; }
.hp b { font-weight: 500; font-size: 11.500px; }
.li { background: #0a74b3; border-radius: 4px; font-weight: 700; font-size: 24px; line-height: 30px; }
.dev { width: 32px; }
.dev-badge { position: absolute; left: 15px; top: -11px; width: 22px; height: 22px; border-radius: 50%; background: #5a666f; color: #fff; font-weight: 400; font-size: 12px; line-height: 22px; text-align: center; }
.grey-tile { width: 30px; height: 30px; background: #777; flex: none; }
.dotted::after { content: ""; position: absolute; left: 11px; top: 35px; width: 8px; height: 3px; border-radius: 2px; background: #5f6b72; }
.active::before { content: ""; position: absolute; left: -8px; top: -10px; width: 46px; height: 50px; border-radius: 5px; background: #e6f3f7; box-shadow: 0 0 1px rgba(0,0,0,.2); }
.active .app-ic { position: relative; }
.active::after { content: ""; position: absolute; left: 5px; top: 35px; width: 21px; height: 3px; border-radius: 2px; background: #5f6b72; }
.tray { margin-left: auto; padding-right: 24px; display: flex; align-items: center; flex: none; }
.t-caret { width: 14px; height: 8px; }
.t-cloud { width: 20px; height: 13px; margin-left: 22px; }
.t-sync { position: relative; width: 20px; height: 21px; margin-left: 20px; }
.sync-ic { width: 20px; height: 21px; }
.sync-dot { position: absolute; left: 10px; top: 10px; width: 10px; height: 10px; border-radius: 50%; background: #f59a0a; }
.line { display: block; }
.t-lang { width: 34px; margin-left: 21px; text-align: center; line-height: 20px; font-size: 14px; }
.t-wifi { width: 20px; height: 14px; margin-left: 20px; }
.t-mute { width: 20px; height: 14px; margin-left: 10px; }
.t-batt { width: 20px; height: 15px; margin-left: 10px; }
.t-clock { width: 85px; margin-left: 13px; text-align: right; line-height: 20px; font-size: 14px; }
```
